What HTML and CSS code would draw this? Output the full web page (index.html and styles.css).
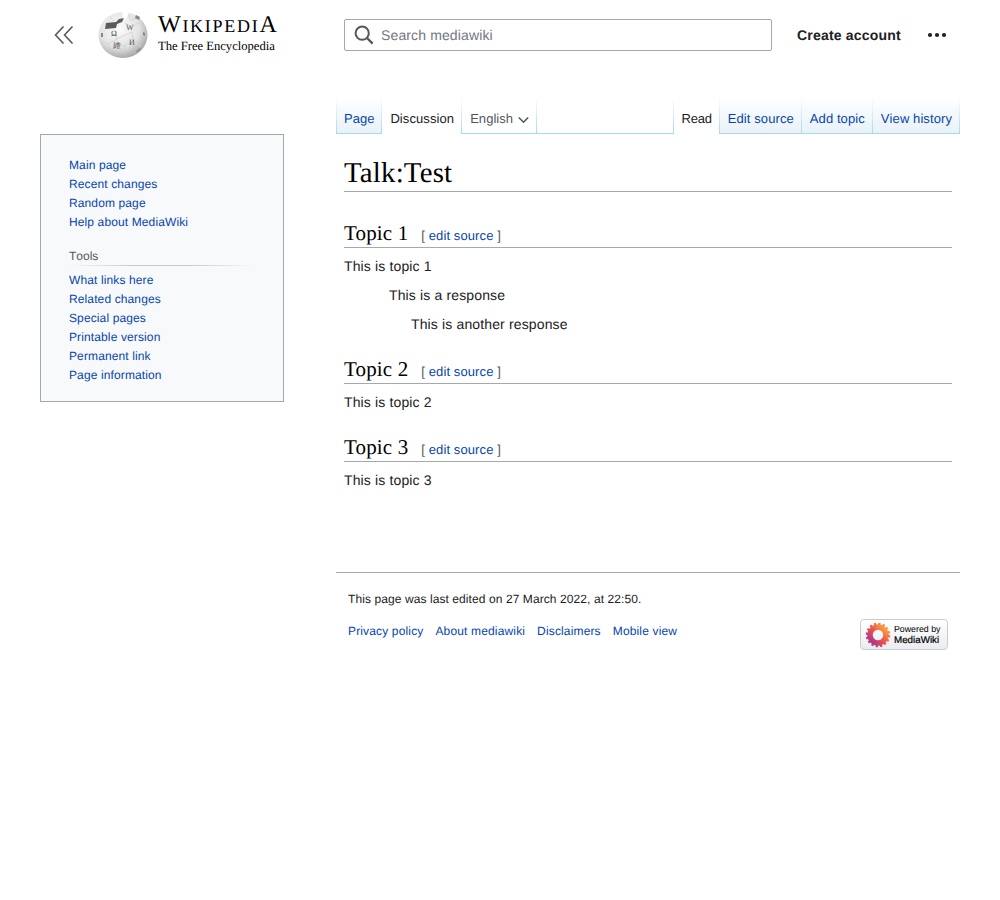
FILE: index.html
```html
<!DOCTYPE html>
<html lang="en">
<head>
<meta charset="utf-8">
<title>Talk:Test - mediawiki</title>
<link rel="stylesheet" href="styles.css">
</head>
<body>
<header class="site-header">
  <div class="header-start">
    <button class="collapse" aria-label="Toggle sidebar">
      <svg width="20" height="20" viewBox="0 0 20 20"><path d="M9.5 1.5 1.5 10l8 8.5M18.5 1.5 10.5 10l8 8.5" fill="none" stroke="#54595d" stroke-width="1.6"/></svg>
    </button>
    <a class="logo" href="#">
      <svg class="globe" width="50" height="46" viewBox="0 0 50 46">
        <defs><radialGradient id="g" cx="0.42" cy="0.36" r="0.7"><stop offset="0" stop-color="#fdfdfd"/><stop offset="0.6" stop-color="#e2e2e2"/><stop offset="1" stop-color="#9a9a9a"/></radialGradient></defs>
        <ellipse cx="25" cy="23" rx="24.500" ry="23" fill="url(#g)"/>
        <path d="M7 17 8 11l10-1 3-3 5-1-2 4-5 2-1 4Z" fill="#5c5c5c"/>
        <path d="M24 0 31 0 28 8 25 6Z" fill="#fff"/>
        <path d="M12 5 16 9M30 3l3 5 7-2M27 11l7 4 8-5M17 18l2 9-9 5M25 24l9-4 1 9-8 4-1 8M4 29l6 3 3 8M35 30l8 4M19 27l6-3M27 34l-9-2" fill="none" stroke="#cfcfcf" stroke-width="0.800"/>
        <path d="M38 3l4 2-1 3-4-2ZM3 21l2 0 0 4-2 0ZM45 20l2 1 0 3-2-1ZM38 39l4-3 1 1-4 3Z" fill="#888"/>
        <text x="13" y="24" class="glyph">Ω</text>
        <text x="28" y="18" class="glyph">W</text>
        <text x="31" y="33" class="glyph">И</text>
        <text x="15" y="36" class="glyph">維</text>
      </svg>
      <span class="wordmark">
        <span class="wm-title"><span class="cap">W</span>IKIPEDI<span class="cap">A</span></span>
        <span class="wm-tag">The Free Encyclopedia</span>
      </span>
    </a>
  </div>
  <form class="search">
    <svg class="search-icon" width="20" height="20" viewBox="0 0 20 20"><circle cx="8.2" cy="8.2" r="6.6" fill="none" stroke="#54595d" stroke-width="2"/><path d="m13 13 5.6 5.6" stroke="#54595d" stroke-width="2.4" fill="none"/></svg>
    <span class="search-placeholder">Search mediawiki</span>
  </form>
  <div class="header-end">
    <a class="create" href="#">Create account</a>
    <svg class="more" width="20" height="6" viewBox="0 0 20 6"><circle cx="3" cy="3" r="2.1" fill="#202122"/><circle cx="10" cy="3" r="2.1" fill="#202122"/><circle cx="17" cy="3" r="2.1" fill="#202122"/></svg>
  </div>
</header>

<div class="layout">
  <nav class="sidebar">
    <ul class="side-list">
      <li><a href="#">Main page</a></li>
      <li><a href="#">Recent changes</a></li>
      <li><a href="#">Random page</a></li>
      <li><a href="#">Help about MediaWiki</a></li>
    </ul>
    <h3 class="side-heading">Tools</h3>
    <ul class="side-list">
      <li><a href="#">What links here</a></li>
      <li><a href="#">Related changes</a></li>
      <li><a href="#">Special pages</a></li>
      <li><a href="#">Printable version</a></li>
      <li><a href="#">Permanent link</a></li>
      <li><a href="#">Page information</a></li>
    </ul>
  </nav>

  <div class="main">
    <div class="tabs">
      <div class="tabgroup">
        <a class="tab first tab-page" href="#">Page</a>
        <a class="tab selected" href="#">Discussion</a>
        <a class="tab lang" href="#">English
          <svg width="11" height="8" viewBox="0 0 11 8"><path d="M.8 1.500 5.500 6.200 10.200 1.500" fill="none" stroke="#54595d" stroke-width="1.600"/></svg>
        </a>
      </div>
      <div class="tab-fill"></div>
      <div class="tabgroup">
        <a class="tab selected first tab-read" href="#">Read</a>
        <a class="tab" href="#">Edit source</a>
        <a class="tab" href="#">Add topic</a>
        <a class="tab" href="#">View history</a>
      </div>
    </div>

    <main class="content">
      <h1 class="page-title">Talk:Test</h1>
      <h2 class="section">Topic 1<span class="editsection">[ <a href="#">edit source</a> ]</span></h2>
      <p class="para">This is topic 1</p>
      <p class="reply level-2">This is a response</p>
      <p class="reply level-3">This is another response</p>
      <h2 class="section">Topic 2<span class="editsection">[ <a href="#">edit source</a> ]</span></h2>
      <p class="para">This is topic 2</p>
      <h2 class="section">Topic 3<span class="editsection">[ <a href="#">edit source</a> ]</span></h2>
      <p class="para">This is topic 3</p>
    </main>

    <footer class="footer">
      <p class="edited">This page was last edited on 27 March 2022, at 22:50.</p>
      <div class="footer-row">
        <ul class="footer-links">
          <li><a href="#">Privacy policy</a></li>
          <li><a href="#">About mediawiki</a></li>
          <li><a href="#">Disclaimers</a></li>
          <li><a href="#">Mobile view</a></li>
        </ul>
        <a class="powered" href="#">
          <svg width="26" height="26" viewBox="0 0 26 26">
            <defs><linearGradient id="mw" x1="0" y1="1" x2="1" y2="0"><stop offset="0" stop-color="#9b3592"/><stop offset="0.5" stop-color="#f0504f"/><stop offset="1" stop-color="#fbb03b"/></linearGradient></defs>
            <circle cx="13" cy="13" r="8" fill="none" stroke="url(#mw)" stroke-width="5.500"/>
            <circle cx="13" cy="13" r="11" fill="none" stroke="url(#mw)" stroke-width="2.600" stroke-dasharray="2.200 2.120"/>
          </svg>
          <span class="powered-text"><span class="pw-top">Powered by</span><span class="pw-bottom">MediaWiki</span></span>
        </a>
      </div>
    </footer>
  </div>
</div>
</body>
</html>
```
FILE: styles.css
```css
* { box-sizing: border-box; }
html, body { margin: 0; padding: 0; background: #fff; }
body { font-family: "Liberation Sans", Arial, sans-serif; font-size: 14px; color: #202122; text-rendering: geometricPrecision; font-kerning: none; }
a { color: #0645ad; text-decoration: none; }
ul { list-style: none; margin: 0; padding: 0; }

.site-header { display: flex; align-items: flex-start; height: 97px; padding: 0 40px; }
.header-start { display: flex; align-items: flex-start; width: 304px; flex: none; }
.collapse { border: 0; background: none; padding: 0; margin: 25px 0 0 14px; width: 20px; height: 20px; display: block; }
.logo { display: flex; margin: 12px 0 0 24px; color: #000; }
.globe { display: block; }
.glyph { font: 8px "Liberation Serif", serif; fill: #555; }
.wordmark { display: flex; flex-direction: column; margin-left: 10px; }
.wm-title { font: 18px/26px "Liberation Serif", serif; height: 28px; letter-spacing: 1.72px; white-space: nowrap; }
.wm-title .cap { font-size: 24px; }
.wm-tag { font: 12.600px/13px "Liberation Serif", serif; white-space: nowrap; }

.search { display: flex; align-items: center; width: 428px; height: 32px; margin-top: 19px; border: 1px solid #a2a9b1; border-radius: 2px; padding-left: 9px; flex: none; }
.search-icon { flex: none; }
.search-placeholder { color: #72777d; font-size: 14px; margin-left: 7px; letter-spacing: 0.13px; }

.header-end { display: flex; align-items: center; margin-top: 19px; height: 32px; margin-left: 25px; }
.create { color: #202122; font-weight: bold; font-size: 14px; letter-spacing: 0.2px; }
.more { margin-left: 26px; }

.layout { display: flex; align-items: flex-start; padding: 0 40px; }
.sidebar { width: 244px; flex: none; margin-top: 37px; height: 268px; padding: 21px 28px 0; background: #f8f9fa; border: 1px solid #a2a9b1; font-size: 12px; line-height: 19px; letter-spacing: 0.12px; }
.side-heading { margin: 17px 0 5px; height: 17px; font-size: 12px; font-weight: normal; line-height: 14px; letter-spacing: 0; color: #54595d; background: linear-gradient(90deg, rgba(200,204,209,0) 0, #c8ccd1 33%, #c8ccd1 66%, rgba(200,204,209,0) 100%) bottom/100% 1px no-repeat; }

.main { margin-left: 52px; width: 624px; flex: none; }
.tabs { display: flex; height: 37px; font-size: 13px; letter-spacing: 0.09px; }
.tabgroup { display: flex; }
.tab-fill { flex: 1; border-bottom: 1px solid #a7d7f9; }
.tab { display: block; padding: 10px 8px 0; border-bottom: 1px solid #a7d7f9; background: linear-gradient(to top, #a7d7f9, #fff) right / 1px 100% no-repeat, linear-gradient(to top, #e8f2f8 0, #fff 100%); line-height: 24px; white-space: nowrap; }
.tab.first { background: linear-gradient(to top, #a7d7f9, #fff) right / 1px 100% no-repeat, linear-gradient(to top, #a7d7f9, #fff) left / 1px 100% no-repeat, linear-gradient(to top, #e8f2f8 0, #fff 100%); }
.tab.selected { background: linear-gradient(to top, #a7d7f9, #fff) right / 1px 100% no-repeat, #fff; color: #202122; border-bottom: 0; }
.tab.selected.first { padding-left: 9px; background: linear-gradient(to top, #a7d7f9, #fff) right / 1px 100% no-repeat, linear-gradient(to top, #a7d7f9, #fff) left / 1px 100% no-repeat, #fff; }
.tab.lang { color: #54595d; background: linear-gradient(to top, #a7d7f9, #fff) right / 1px 100% no-repeat, #fff; display: flex; align-items: flex-start; gap: 5px; letter-spacing: 0.05px; }
.tab.lang svg { margin-top: 9px; }
.tab-page { letter-spacing: 0; }
.tab-read { letter-spacing: -0.2px; }

.content { padding: 20px 8px 0; height: 438px; line-height: 22.4px; letter-spacing: 0.14px; }
.page-title { font: normal 28.8px/39px "Liberation Serif", serif; letter-spacing: 0.22px; color: #000; margin: 0; border-bottom: 1px solid #a2a9b1; height: 38px; }
.section { font: normal 21px/27px "Liberation Serif", serif; letter-spacing: 0.15px; color: #000; margin: 20.4px 0 0; height: 28px; border-bottom: 1px solid #a2a9b1; }
.page-title + .section { margin-top: 28px; }
.editsection { font: 13px/20px "Liberation Sans", Arial, sans-serif; letter-spacing: 0.1px; color: #54595d; margin-left: 13px; }
.para, .reply { margin: 7px 0 0; }
.reply { margin-top: 6.6px; }
.level-2 { margin-left: 45px; }
.level-3 { margin-left: 67px; }

.footer { border-top: 1px solid #a2a9b1; padding: 18px 12px 0; font-size: 12px; }
.edited { margin: 0; line-height: 17px; letter-spacing: 0.085px; }
.footer-row { display: flex; justify-content: space-between; align-items: flex-start; margin-top: 11px; }
.footer-links { display: flex; gap: 12px; line-height: 17px; padding-top: 4px; letter-spacing: 0.15px; }
.powered { display: flex; align-items: center; width: 88px; height: 31px; border: 1px solid #c8ccd1; border-radius: 4px; background: linear-gradient(to bottom, #fff, #eaecf0); padding-left: 4px; color: #000; gap: 3px; }
.powered-text { display: flex; flex-direction: column; font-size: 8.800px; line-height: 11px; white-space: nowrap; }
.pw-bottom { font-size: 9.800px; font-weight: 500; -webkit-text-stroke: 0.2px #000; }
```
